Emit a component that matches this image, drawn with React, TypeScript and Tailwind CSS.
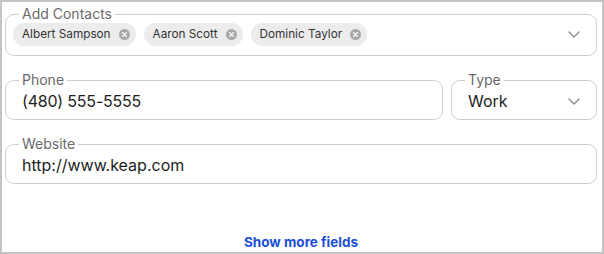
const font = { fontFamily: "Inter, 'Liberation Sans', sans-serif" };

const contacts = ["Albert Sampson", "Aaron Scott", "Dominic Taylor"];

function Chevron() {
  return (
    <svg width="12" height="7" viewBox="0 0 12 7" className="shrink-0">
      <polyline
        points="1,1 6,6 11,1"
        fill="none"
        stroke="#8c8c8c"
        strokeWidth="1.4"
        strokeLinecap="round"
        strokeLinejoin="round"
      />
    </svg>
  );
}

function RemoveIcon() {
  return (
    <svg width="11" height="11" viewBox="0 0 11 11" className="shrink-0">
      <circle cx="5.5" cy="5.5" r="5.5" fill="#a8a8a8" />
      <path d="M3.6 3.6 L7.4 7.4 M7.4 3.6 L3.6 7.4" stroke="#ffffff" strokeWidth="1.3" strokeLinecap="round" />
    </svg>
  );
}

function Chip({ name }: { name: string }) {
  return (
    <span className="flex h-[23px] items-center gap-[8px] rounded-full bg-[#ececec] pl-[9px] pr-[6px] text-[11.75px] text-[#333333]">
      {name}
      <RemoveIcon />
    </span>
  );
}

function Field({
  label,
  className = "",
  children,
}: {
  label: string;
  className?: string;
  children: React.ReactNode;
}) {
  return (
    <fieldset className={`rounded-[9px] border border-[#cfcfcf] p-0 ${className}`}>
      <legend className="ml-[13px] px-[3px] text-[14px] leading-[18px] text-[#6a6a6a]">{label}</legend>
      {children}
    </fieldset>
  );
}

export default function App() {
  return (
    <div
      style={font}
      className="flex h-[254px] w-[604px] flex-col border-2 border-[#c4c4c4] bg-white pl-[3px] pr-[5px] pt-[3px]"
    >
      <Field label="Add Contacts">
        <div className="flex items-center pb-[9px] pl-[7px] pr-[16px]">
          <div className="flex flex-1 gap-[8px]">
            {contacts.map((c) => (
              <Chip key={c} name={c} />
            ))}
          </div>
          <Chevron />
        </div>
      </Field>

      <div className="mt-[15px] flex gap-[8px]">
        <Field label="Phone" className="flex-1">
          <div className="pb-[6px] pl-[16px] text-[16px] leading-[24px] tracking-[-0.2px] text-[#1e1e1e]">
            (480) 555-5555
          </div>
        </Field>
        <Field label="Type" className="w-[146px]">
          <div className="flex items-center justify-between pb-[6px] pl-[16px] pr-[16px] text-[16px] leading-[24px] text-[#1e1e1e]">
            Work
            <Chevron />
          </div>
        </Field>
      </div>

      <Field label="Website" className="mt-[15px]">
        <div className="pb-[6px] pl-[16px] text-[16px] leading-[24px] text-[#1e1e1e]">http://www.keap.com</div>
      </Field>

      <div className="mt-[48px] text-center text-[13.5px] font-bold leading-[20px] text-[#1a4fd6]">
        Show more fields
      </div>
    </div>
  );
}
